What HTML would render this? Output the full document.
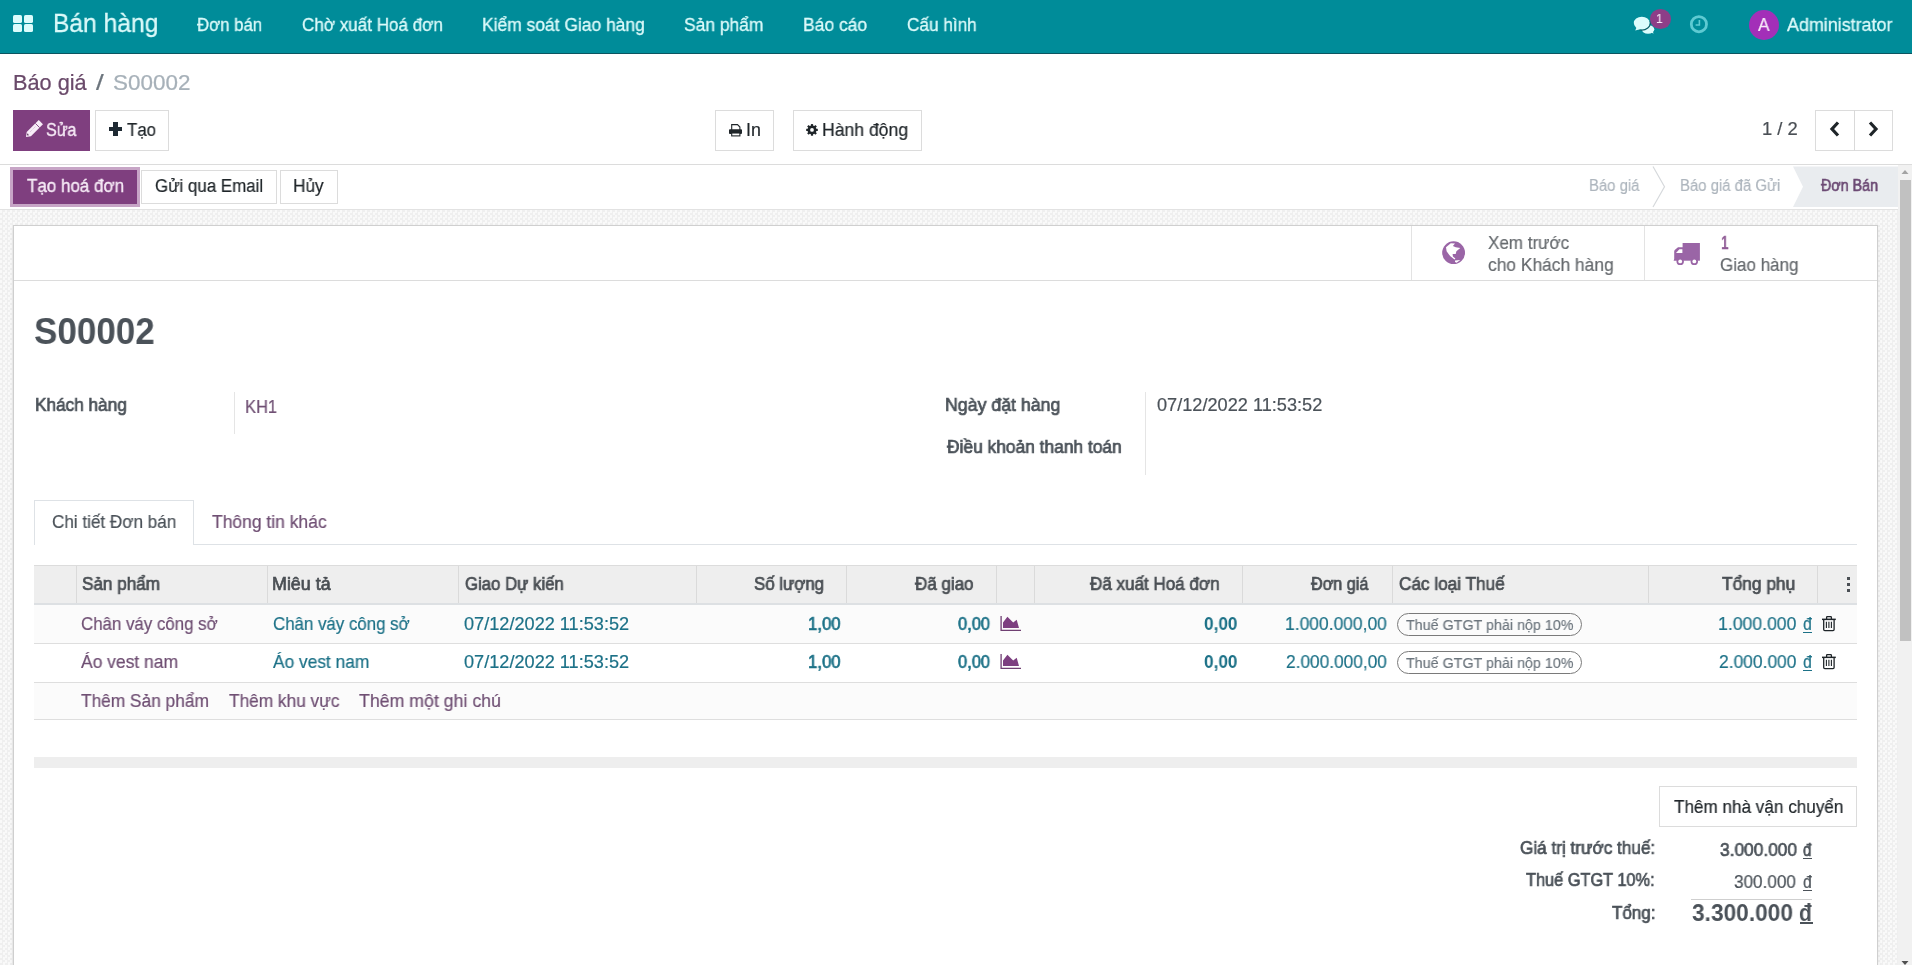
<!DOCTYPE html>
<html><head><meta charset="utf-8"><title>S00002</title>
<style>
html,body{margin:0;padding:0;}
body{width:1912px;height:965px;overflow:hidden;position:relative;background:#fff;font-family:"Liberation Sans",sans-serif;}
.r{position:absolute;}
.t{position:absolute;white-space:nowrap;line-height:1.117;transform-origin:0 0;will-change:transform;}
</style></head><body>
<div class="r" style="left:0px;top:0px;width:1912px;height:53px;background:#008c99;"></div>
<div class="r" style="left:0px;top:53px;width:1912px;height:1px;background:#0b5560;"></div>
<div class="r" style="left:13px;top:15px;width:9px;height:7.9px;background:#dcfcfc;border-radius:1.6px;"></div>
<div class="r" style="left:24px;top:15px;width:9px;height:7.9px;background:#dcfcfc;border-radius:1.6px;"></div>
<div class="r" style="left:13px;top:24.2px;width:9px;height:7.9px;background:#dcfcfc;border-radius:1.6px;"></div>
<div class="r" style="left:24px;top:24.2px;width:9px;height:7.9px;background:#dcfcfc;border-radius:1.6px;"></div>
<div class="t" style="left:52.51px;top:9.00px;font-size:26.02px;color:#dcfafa;-webkit-text-stroke:0.291px #dcfafa;transform:scaleX(0.9454);-webkit-text-stroke:0.3px #dcfafa;">Bán hàng</div>
<div class="t" style="left:197.40px;top:15.00px;font-size:18.31px;color:#dcfafa;-webkit-text-stroke:0.205px #dcfafa;transform:scaleX(0.9171);-webkit-text-stroke:0.3px #dcfafa;">Đơn bán</div>
<div class="t" style="left:301.97px;top:15.00px;font-size:18.31px;color:#dcfafa;-webkit-text-stroke:0.205px #dcfafa;transform:scaleX(0.9322);-webkit-text-stroke:0.3px #dcfafa;">Chờ xuất Hoá đơn</div>
<div class="t" style="left:482.05px;top:15.00px;font-size:18.31px;color:#dcfafa;-webkit-text-stroke:0.205px #dcfafa;transform:scaleX(0.9527);-webkit-text-stroke:0.3px #dcfafa;">Kiểm soát Giao hàng</div>
<div class="t" style="left:684.25px;top:15.00px;font-size:18.31px;color:#dcfafa;-webkit-text-stroke:0.205px #dcfafa;transform:scaleX(0.9512);-webkit-text-stroke:0.3px #dcfafa;">Sản phẩm</div>
<div class="t" style="left:803.05px;top:15.00px;font-size:18.31px;color:#dcfafa;-webkit-text-stroke:0.205px #dcfafa;transform:scaleX(0.9545);-webkit-text-stroke:0.3px #dcfafa;">Báo cáo</div>
<div class="t" style="left:906.86px;top:15.00px;font-size:18.31px;color:#dcfafa;-webkit-text-stroke:0.205px #dcfafa;transform:scaleX(0.9389);-webkit-text-stroke:0.3px #dcfafa;">Cấu hình</div>
<div class="t" style="left:1787.00px;top:15.00px;font-size:18.31px;color:#dcfafa;-webkit-text-stroke:0.205px #dcfafa;transform:scaleX(0.9778);-webkit-text-stroke:0.3px #dcfafa;">Administrator</div>
<div class="r" style="left:1749px;top:9.6px;width:30.2px;height:30.2px;background:#a32fb8;border-radius:50%;"></div>
<div class="t" style="left:1758.10px;top:15.70px;font-size:17.88px;color:#f7e8f9;-webkit-text-stroke:0.200px #f7e8f9;transform:scaleX(0.9667);">A</div>
<svg class="r" style="left:1632px;top:15px" width="24" height="20" viewBox="0 0 24 20">
<ellipse cx="16" cy="14.3" rx="6.3" ry="4.4" fill="#dcfcfc"/>
<path d="M18 16.5 L21.5 18.8 L20.5 14.5 Z" fill="#dcfcfc"/>
<ellipse cx="9.8" cy="8.1" rx="8" ry="6.4" fill="#dcfcfc"/>
<path d="M17.9 5.9 A8.6 7 0 0 1 7.06 14.7" fill="none" stroke="#0b5d67" stroke-width="1.1"/>
<path d="M4.5 12.5 L3.2 15.6 L9 14 Z" fill="#dcfcfc"/>
</svg>
<div class="r" style="left:1650px;top:9px;width:21px;height:19.5px;background:#8d3e88;border-radius:50%;"></div>
<div class="t" style="left:1656.08px;top:12.30px;font-size:13.08px;color:#f6e6f6;-webkit-text-stroke:0.146px #f6e6f6;transform:scaleX(0.9167);">1</div>
<svg class="r" style="left:1689px;top:15px" width="20" height="20" viewBox="0 0 20 20">
<circle cx="9.9" cy="9.2" r="7.6" fill="none" stroke="#5ecad2" stroke-width="2.8"/>
<path d="M10.4 5 V10 H6.6" fill="none" stroke="#5ecad2" stroke-width="1.6"/>
</svg>
<div class="t" style="left:13.08px;top:70.70px;font-size:21.22px;color:#6a4a6a;-webkit-text-stroke:0.237px #6a4a6a;transform:scaleX(1.0239);">Báo giá</div>
<div class="t" style="left:96.20px;top:70.70px;font-size:21.22px;color:#6c757d;-webkit-text-stroke:0.237px #6c757d;transform:scaleX(1.3000);">/</div>
<div class="t" style="left:113.14px;top:70.70px;font-size:21.22px;color:#a7b1b9;-webkit-text-stroke:0.237px #a7b1b9;transform:scaleX(1.0577);">S00002</div>
<div class="r" style="left:13px;top:110px;width:77px;height:41px;background:#7f3f7f;"></div>
<svg class="r" style="left:24px;top:119px" width="20" height="20" viewBox="0 0 20 20">
<path d="M2 18 L6.95 17.29 L18.97 5.27 L14.73 1.03 L2.71 13.05 Z" fill="#f8ecf8"/>
<path d="M15.6 8.6 L11.4 4.4" stroke="#7f3f7f" stroke-width="0.9"/>
<path d="M4.2 16.6 L3.4 14.8" stroke="#5a3a5a" stroke-width="1.2"/>
<path d="M6 13 L12 7" stroke="#b89ab8" stroke-width="0.6" stroke-dasharray="1 1"/>
</svg>
<div class="t" style="left:45.60px;top:120.50px;font-size:17.88px;color:#f6eaf6;-webkit-text-stroke:0.200px #f6eaf6;transform:scaleX(0.9000);-webkit-text-stroke:0.35px #f6eaf6;">Sửa</div>
<div class="r" style="left:95px;top:110px;width:74px;height:41px;background:#fff;border:1px solid #dcdcdc;box-sizing:border-box;"></div>
<div class="r" style="left:108.8px;top:126.6px;width:13.6px;height:4.4px;background:#1f2a33;"></div>
<div class="r" style="left:113.4px;top:122.2px;width:4.4px;height:13.6px;background:#1f2a33;"></div>
<div class="t" style="left:127.00px;top:120.50px;font-size:17.88px;color:#1f2529;-webkit-text-stroke:0.200px #1f2529;transform:scaleX(0.9433);">Tạo</div>
<div class="r" style="left:715px;top:110px;width:59px;height:41px;background:#fff;border:1px solid #dcdcdc;box-sizing:border-box;"></div>
<svg class="r" style="left:728px;top:123px" width="15" height="14" viewBox="0 0 15 14">
<path d="M3.7 7 V1.6 H9.5 L11.9 4 V7" fill="#fff" stroke="#1f2529" stroke-width="1.1"/>
<rect x="1" y="6.2" width="13" height="4.8" rx="0.9" fill="#1f2529"/>
<rect x="3.7" y="10" width="8.2" height="2.9" fill="#fff" stroke="#1f2529" stroke-width="1.1"/>
</svg>
<div class="t" style="left:746.03px;top:120.80px;font-size:17.88px;color:#1f2529;-webkit-text-stroke:0.200px #1f2529;transform:scaleX(0.9692);">In</div>
<div class="r" style="left:793px;top:110px;width:129px;height:41px;background:#fff;border:1px solid #dcdcdc;box-sizing:border-box;"></div>
<svg class="r" style="left:806px;top:124px" width="12" height="12" viewBox="0 0 12 12">
<g fill="#1f2529"><circle cx="6" cy="5.9" r="4.5"/>
<rect x="4.9" y="0.1" width="2.2" height="11.6"/>
<rect x="4.9" y="0.1" width="2.2" height="11.6" transform="rotate(45 6 5.9)"/>
<rect x="4.9" y="0.1" width="2.2" height="11.6" transform="rotate(90 6 5.9)"/>
<rect x="4.9" y="0.1" width="2.2" height="11.6" transform="rotate(135 6 5.9)"/></g>
<circle cx="6" cy="5.9" r="1.9" fill="#fff"/>
</svg>
<div class="t" style="left:822.02px;top:120.80px;font-size:17.88px;color:#1f2529;-webkit-text-stroke:0.200px #1f2529;transform:scaleX(0.9849);">Hành động</div>
<div class="t" style="left:1761.97px;top:119.60px;font-size:17.88px;color:#4a4f55;-webkit-text-stroke:0.200px #4a4f55;transform:scaleX(1.0303);">1 / 2</div>
<div class="r" style="left:1815px;top:110px;width:78px;height:41px;background:#fff;border:1px solid #dcdcdc;box-sizing:border-box;"></div>
<div class="r" style="left:1854px;top:110px;width:1px;height:41px;background:#d9d9d9;"></div>
<svg class="r" style="left:1828px;top:120px" width="14" height="18" viewBox="0 0 14 18">
<path d="M10 2.5 L4 9 L10 15.5" fill="none" stroke="#1f2529" stroke-width="3.2" stroke-linejoin="miter"/></svg>
<svg class="r" style="left:1866px;top:120px" width="14" height="18" viewBox="0 0 14 18">
<path d="M4 2.5 L10 9 L4 15.5" fill="none" stroke="#1f2529" stroke-width="3.2" stroke-linejoin="miter"/></svg>
<div class="r" style="left:0px;top:164px;width:1912px;height:1px;background:#dcdcdc;"></div>
<div class="r" style="left:10px;top:167px;width:130px;height:40px;background:#c7a5c6;"></div>
<div class="r" style="left:13px;top:170px;width:124px;height:34px;background:#7f3f7f;"></div>
<div class="t" style="left:27.30px;top:177.00px;font-size:17.88px;color:#f6eaf6;-webkit-text-stroke:0.200px #f6eaf6;transform:scaleX(0.9505);-webkit-text-stroke:0.35px #f6eaf6;">Tạo hoá đơn</div>
<div class="r" style="left:141px;top:170px;width:136px;height:34px;background:#fff;border:1px solid #dcdcdc;box-sizing:border-box;"></div>
<div class="t" style="left:155.30px;top:177.00px;font-size:17.88px;color:#1f2529;-webkit-text-stroke:0.200px #1f2529;transform:scaleX(0.9469);">Gửi qua Email</div>
<div class="r" style="left:280px;top:170px;width:58px;height:34px;background:#fff;border:1px solid #dcdcdc;box-sizing:border-box;"></div>
<div class="t" style="left:293.04px;top:177.00px;font-size:17.88px;color:#1f2529;-webkit-text-stroke:0.200px #1f2529;transform:scaleX(0.9645);">Hủy</div>
<svg class="r" style="left:1560px;top:165px" width="338" height="44" viewBox="0 0 338 44">
<path d="M233 1.5 H338 V42 H233 L243 21.75 Z" fill="#e9ecef"/>
<path d="M93 1.5 L104.5 21.75 L93 42" fill="none" stroke="#d6d9dc" stroke-width="1.2"/>
</svg>
<div class="t" style="left:1588.82px;top:177.30px;font-size:16.86px;color:#adb5bd;-webkit-text-stroke:0.189px #adb5bd;transform:scaleX(0.8825);">Báo giá</div>
<div class="t" style="left:1680.12px;top:177.30px;font-size:16.86px;color:#adb5bd;-webkit-text-stroke:0.189px #adb5bd;transform:scaleX(0.8839);">Báo giá đã Gửi</div>
<div class="t" style="left:1821.25px;top:177.30px;font-size:16.86px;color:#6c4a74;-webkit-text-stroke:0.660px #6c4a74;transform:scaleX(0.8471);">Đơn Bán</div>
<div class="r" style="left:0px;top:209px;width:1898px;height:756px;background-color:#f4f4f4;background-image:repeating-conic-gradient(#efefef 0 25%,#f9f9f9 0 50%);background-size:5px 5px;border-top:1px solid #e2e2e2;box-sizing:border-box;"></div>
<div class="r" style="left:13px;top:225px;width:1865px;height:740px;background:#fff;border:1px solid #cfcfcf;border-bottom:none;box-sizing:border-box;box-shadow:0 2px 4px rgba(0,0,0,.08);"></div>
<div class="r" style="left:14px;top:280px;width:1863px;height:1px;background:#dcdcdc;"></div>
<div class="r" style="left:1411px;top:226px;width:1px;height:54px;background:#e3e3e3;"></div>
<div class="r" style="left:1644px;top:226px;width:1px;height:54px;background:#e3e3e3;"></div>
<svg class="r" style="left:1442px;top:241px" width="24" height="24" viewBox="0 0 24 24">
<circle cx="11.6" cy="11.7" r="11.4" fill="#9a65a6"/>
<path d="M4 6.3 L8.8 2.3 L13 2.6 L10.9 4.9 L13.7 6.3 L18.3 7 L14.4 10.2 L13.7 13 L10.6 13 L10.9 15.5 L13.4 17.6 L12.5 18.5 L8.1 15.1 L4.6 10.2 Z" fill="#fff"/>
<path d="M13 19.4 L18.3 19 L14.5 21.8 L13 21 Z" fill="#fff"/>
</svg>
<div class="t" style="left:1487.60px;top:234.00px;font-size:17.88px;color:#666a6e;-webkit-text-stroke:0.200px #666a6e;transform:scaleX(0.9529);">Xem trước</div>
<div class="t" style="left:1487.60px;top:255.50px;font-size:17.88px;color:#666a6e;-webkit-text-stroke:0.200px #666a6e;transform:scaleX(0.9734);">cho Khách hàng</div>
<svg class="r" style="left:1673px;top:242px" width="28" height="24" viewBox="0 0 28 24">
<g fill="#9a65a6"><rect x="9.6" y="1" width="17.3" height="17.7"/>
<path d="M0.6 18.7 L1.2 17 V9.6 Q1.2 8.6 2 7.8 L5 5.3 H10 V18.7 Z"/>
<circle cx="7.2" cy="19.4" r="3.7"/><circle cx="21.3" cy="19.4" r="3.7"/></g>
<path d="M3 11 L6.4 7.2 H9.4 V10.9 Z" fill="#fff"/>
<circle cx="7.2" cy="19.4" r="1.9" fill="#fff"/><circle cx="21.3" cy="19.4" r="1.9" fill="#fff"/>
</svg>
<div class="t" style="left:1720.83px;top:234.00px;font-size:17.88px;color:#8f5a95;-webkit-text-stroke:0.700px #8f5a95;transform:scaleX(0.7667);">1</div>
<div class="t" style="left:1720.40px;top:255.50px;font-size:17.88px;color:#666a6e;-webkit-text-stroke:0.200px #666a6e;transform:scaleX(0.9524);">Giao hàng</div>
<div class="t" style="left:34.47px;top:309.60px;font-size:37.79px;color:#4b5259;font-weight:bold;transform:scaleX(0.9266);">S00002</div>
<div class="t" style="left:34.68px;top:395.00px;font-size:18.75px;color:#4b5259;-webkit-text-stroke:0.734px #4b5259;transform:scaleX(0.9172);">Khách hàng</div>
<div class="r" style="left:234px;top:392px;width:1px;height:42px;background:#e5e5e5;"></div>
<div class="t" style="left:244.58px;top:397.80px;font-size:17.88px;color:#6f4f73;-webkit-text-stroke:0.200px #6f4f73;transform:scaleX(0.9242);">KH1</div>
<div class="t" style="left:945.05px;top:395.00px;font-size:18.75px;color:#4b5259;-webkit-text-stroke:0.734px #4b5259;transform:scaleX(0.9458);">Ngày đặt hàng</div>
<div class="t" style="left:946.93px;top:437.20px;font-size:18.75px;color:#4b5259;-webkit-text-stroke:0.734px #4b5259;transform:scaleX(0.9259);">Điều khoản thanh toán</div>
<div class="r" style="left:1145px;top:392px;width:1px;height:83px;background:#e5e5e5;"></div>
<div class="t" style="left:1156.80px;top:396.30px;font-size:17.88px;color:#4b5259;-webkit-text-stroke:0.200px #4b5259;transform:scaleX(1.0167);">07/12/2022 11:53:52</div>
<div class="r" style="left:34px;top:500px;width:160px;height:45px;background:#fff;border:1px solid #dee2e6;border-bottom:none;box-sizing:border-box;"></div>
<div class="r" style="left:193px;top:544px;width:1664px;height:1px;background:#dee2e6;"></div>
<div class="t" style="left:52.00px;top:513.40px;font-size:17.88px;color:#4b5259;-webkit-text-stroke:0.200px #4b5259;transform:scaleX(0.9566);">Chi tiết Đơn bán</div>
<div class="t" style="left:212.00px;top:513.40px;font-size:17.88px;color:#6f4f73;-webkit-text-stroke:0.200px #6f4f73;transform:scaleX(0.9786);">Thông tin khác</div>
<div class="r" style="left:34px;top:565px;width:1823px;height:40px;background:#eeeeee;border-top:1px solid #dcdcdc;box-sizing:border-box;"></div>
<div class="r" style="left:34px;top:603px;width:1823px;height:2px;background:#dde0e3;"></div>
<div class="r" style="left:76px;top:566px;width:1px;height:37px;background:#dadada;"></div>
<div class="r" style="left:267px;top:566px;width:1px;height:37px;background:#dadada;"></div>
<div class="r" style="left:458px;top:566px;width:1px;height:37px;background:#dadada;"></div>
<div class="r" style="left:696px;top:566px;width:1px;height:37px;background:#dadada;"></div>
<div class="r" style="left:846px;top:566px;width:1px;height:37px;background:#dadada;"></div>
<div class="r" style="left:996px;top:566px;width:1px;height:37px;background:#dadada;"></div>
<div class="r" style="left:1034px;top:566px;width:1px;height:37px;background:#dadada;"></div>
<div class="r" style="left:1242px;top:566px;width:1px;height:37px;background:#dadada;"></div>
<div class="r" style="left:1392px;top:566px;width:1px;height:37px;background:#dadada;"></div>
<div class="r" style="left:1648px;top:566px;width:1px;height:37px;background:#dadada;"></div>
<div class="r" style="left:1817px;top:566px;width:1px;height:37px;background:#dadada;"></div>
<div class="t" style="left:82.20px;top:575.30px;font-size:17.88px;color:#4a4f54;-webkit-text-stroke:0.700px #4a4f54;transform:scaleX(0.9580);">Sản phẩm</div>
<div class="t" style="left:272.20px;top:575.30px;font-size:17.88px;color:#4a4f54;-webkit-text-stroke:0.700px #4a4f54;">Miêu tả</div>
<div class="t" style="left:464.50px;top:575.30px;font-size:17.88px;color:#4a4f54;-webkit-text-stroke:0.700px #4a4f54;transform:scaleX(0.9381);">Giao Dự kiến</div>
<div class="t" style="left:753.50px;top:575.30px;font-size:17.88px;color:#4a4f54;-webkit-text-stroke:0.700px #4a4f54;transform:scaleX(0.9432);">Số lượng</div>
<div class="t" style="left:914.55px;top:575.30px;font-size:17.88px;color:#4a4f54;-webkit-text-stroke:0.700px #4a4f54;transform:scaleX(0.9516);">Đã giao</div>
<div class="t" style="left:1090.45px;top:575.30px;font-size:17.88px;color:#4a4f54;-webkit-text-stroke:0.700px #4a4f54;transform:scaleX(0.9537);">Đã xuất Hoá đơn</div>
<div class="t" style="left:1311.10px;top:575.30px;font-size:17.88px;color:#4a4f54;-webkit-text-stroke:0.700px #4a4f54;transform:scaleX(0.9046);">Đơn giá</div>
<div class="t" style="left:1398.80px;top:575.30px;font-size:17.88px;color:#4a4f54;-webkit-text-stroke:0.700px #4a4f54;transform:scaleX(0.9618);">Các loại Thuế</div>
<div class="t" style="left:1721.70px;top:575.30px;font-size:17.88px;color:#4a4f54;-webkit-text-stroke:0.700px #4a4f54;transform:scaleX(0.9707);">Tổng phụ</div>
<div class="r" style="left:1847px;top:577px;width:3px;height:3px;background:#4a4f54;"></div>
<div class="r" style="left:1847px;top:583px;width:3px;height:3px;background:#4a4f54;"></div>
<div class="r" style="left:1847px;top:589px;width:3px;height:3px;background:#4a4f54;"></div>
<div class="r" style="left:34px;top:605px;width:1823px;height:38px;background:#fbfbfb;"></div>
<div class="r" style="left:34px;top:643px;width:1823px;height:1px;background:#dedede;"></div>
<div class="r" style="left:34px;top:644px;width:1823px;height:38px;background:#ffffff;"></div>
<div class="r" style="left:34px;top:682px;width:1823px;height:1px;background:#dedede;"></div>
<div class="r" style="left:34px;top:683px;width:1823px;height:36px;background:#fbfbfb;"></div>
<div class="r" style="left:34px;top:719px;width:1823px;height:1px;background:#dedede;"></div>
<div class="t" style="left:80.50px;top:615.00px;font-size:17.88px;color:#6f4f73;-webkit-text-stroke:0.200px #6f4f73;transform:scaleX(0.9441);">Chân váy công sở</div>
<div class="t" style="left:272.50px;top:615.00px;font-size:17.88px;color:#1c7187;-webkit-text-stroke:0.200px #1c7187;transform:scaleX(0.9441);">Chân váy công sở</div>
<div class="t" style="left:463.50px;top:615.00px;font-size:17.88px;color:#1c7187;-webkit-text-stroke:0.200px #1c7187;transform:scaleX(1.0160);">07/12/2022 11:53:52</div>
<div class="t" style="left:807.76px;top:615.00px;font-size:17.88px;color:#1c7187;-webkit-text-stroke:0.700px #1c7187;transform:scaleX(0.9382);">1,00</div>
<div class="t" style="left:958.30px;top:615.00px;font-size:17.88px;color:#1c7187;-webkit-text-stroke:0.700px #1c7187;transform:scaleX(0.9200);">0,00</div>
<svg class="r" style="left:1000px;top:615px" width="22" height="17" viewBox="0 0 22 17">
<path d="M1.1 1 V15.4 H21" fill="none" stroke="#6f3f72" stroke-width="1.3"/>
<path d="M3 7.6 L7.4 1.8 L13.2 7.6 L16.7 4.7 L19 13.1 H3 Z" fill="#7d3f80"/></svg>
<div class="t" style="left:1204.30px;top:615.00px;font-size:17.88px;color:#1c7187;font-weight:bold;transform:scaleX(0.9618);">0,00</div>
<div class="t" style="left:1285.02px;top:615.00px;font-size:17.88px;color:#1c7187;-webkit-text-stroke:0.200px #1c7187;transform:scaleX(0.9767);">1.000.000,00</div>
<div class="r" style="left:1397px;top:613px;width:185px;height:23px;border:1px solid #7a7a7a;border-radius:12px;box-sizing:border-box;"></div>
<div class="t" style="left:1406.00px;top:615.70px;font-size:15.26px;color:#6c757d;-webkit-text-stroke:0.171px #6c757d;transform:scaleX(0.9382);">Thuế GTGT phải nộp 10%</div>
<div class="t" style="left:1718.41px;top:615.00px;font-size:17.88px;color:#1c7187;-webkit-text-stroke:0.200px #1c7187;transform:scaleX(0.9872);">1.000.000</div>
<div class="t" style="left:1802.90px;top:615.00px;font-size:17.88px;color:#1c7187;-webkit-text-stroke:0.200px #1c7187;transform:scaleX(0.8900);">đ</div>
<div class="r" style="left:1802.9px;top:632.4px;width:8.899999999999864px;height:1px;background:#1c7187;"></div>
<svg class="r" style="left:1822px;top:616px" width="15" height="16" viewBox="0 0 15 16">
<path d="M4.6 2.9 V1.4 Q4.6 0.6 5.4 0.6 H8.6 Q9.4 0.6 9.4 1.4 V2.9" fill="none" stroke="#1f2529" stroke-width="1.3"/>
<rect x="0" y="2.6" width="13.8" height="1.5" fill="#1f2529"/>
<path d="M1.7 4 V13.5 Q1.7 14.6 2.8 14.6 H11 Q12.1 14.6 12.1 13.5 V4" fill="none" stroke="#1f2529" stroke-width="1.3"/>
<path d="M4.4 5.8 V12 M6.9 5.8 V12 M9.4 5.8 V12" stroke="#1f2529" stroke-width="1.1"/></svg>
<div class="t" style="left:80.50px;top:653.00px;font-size:17.88px;color:#6f4f73;-webkit-text-stroke:0.200px #6f4f73;transform:scaleX(0.9768);">Áo vest nam</div>
<div class="t" style="left:272.50px;top:653.00px;font-size:17.88px;color:#1c7187;-webkit-text-stroke:0.200px #1c7187;transform:scaleX(0.9697);">Áo vest nam</div>
<div class="t" style="left:463.50px;top:653.00px;font-size:17.88px;color:#1c7187;-webkit-text-stroke:0.200px #1c7187;transform:scaleX(1.0160);">07/12/2022 11:53:52</div>
<div class="t" style="left:807.76px;top:653.00px;font-size:17.88px;color:#1c7187;-webkit-text-stroke:0.700px #1c7187;transform:scaleX(0.9382);">1,00</div>
<div class="t" style="left:958.30px;top:653.00px;font-size:17.88px;color:#1c7187;-webkit-text-stroke:0.700px #1c7187;transform:scaleX(0.9200);">0,00</div>
<svg class="r" style="left:1000px;top:653px" width="22" height="17" viewBox="0 0 22 17">
<path d="M1.1 1 V15.4 H21" fill="none" stroke="#6f3f72" stroke-width="1.3"/>
<path d="M3 7.6 L7.4 1.8 L13.2 7.6 L16.7 4.7 L19 13.1 H3 Z" fill="#7d3f80"/></svg>
<div class="t" style="left:1204.30px;top:653.00px;font-size:17.88px;color:#1c7187;font-weight:bold;transform:scaleX(0.9618);">0,00</div>
<div class="t" style="left:1286.00px;top:653.00px;font-size:17.88px;color:#1c7187;-webkit-text-stroke:0.200px #1c7187;transform:scaleX(0.9673);">2.000.000,00</div>
<div class="r" style="left:1397px;top:651px;width:185px;height:23px;border:1px solid #7a7a7a;border-radius:12px;box-sizing:border-box;"></div>
<div class="t" style="left:1406.00px;top:653.70px;font-size:15.26px;color:#6c757d;-webkit-text-stroke:0.171px #6c757d;transform:scaleX(0.9382);">Thuế GTGT phải nộp 10%</div>
<div class="t" style="left:1719.40px;top:653.00px;font-size:17.88px;color:#1c7187;-webkit-text-stroke:0.200px #1c7187;transform:scaleX(0.9747);">2.000.000</div>
<div class="t" style="left:1802.90px;top:653.00px;font-size:17.88px;color:#1c7187;-webkit-text-stroke:0.200px #1c7187;transform:scaleX(0.8900);">đ</div>
<div class="r" style="left:1802.9px;top:670.4px;width:8.899999999999864px;height:1px;background:#1c7187;"></div>
<svg class="r" style="left:1822px;top:654px" width="15" height="16" viewBox="0 0 15 16">
<path d="M4.6 2.9 V1.4 Q4.6 0.6 5.4 0.6 H8.6 Q9.4 0.6 9.4 1.4 V2.9" fill="none" stroke="#1f2529" stroke-width="1.3"/>
<rect x="0" y="2.6" width="13.8" height="1.5" fill="#1f2529"/>
<path d="M1.7 4 V13.5 Q1.7 14.6 2.8 14.6 H11 Q12.1 14.6 12.1 13.5 V4" fill="none" stroke="#1f2529" stroke-width="1.3"/>
<path d="M4.4 5.8 V12 M6.9 5.8 V12 M9.4 5.8 V12" stroke="#1f2529" stroke-width="1.1"/></svg>
<div class="t" style="left:80.50px;top:692.00px;font-size:17.88px;color:#6f4f73;-webkit-text-stroke:0.200px #6f4f73;transform:scaleX(0.9687);">Thêm Sản phẩm</div>
<div class="t" style="left:228.70px;top:692.00px;font-size:17.88px;color:#6f4f73;-webkit-text-stroke:0.200px #6f4f73;transform:scaleX(0.9675);">Thêm khu vực</div>
<div class="t" style="left:359.00px;top:692.00px;font-size:17.88px;color:#6f4f73;-webkit-text-stroke:0.200px #6f4f73;transform:scaleX(0.9930);">Thêm một ghi chú</div>
<div class="r" style="left:34px;top:757px;width:1823px;height:11px;background:#eeeeee;"></div>
<div class="r" style="left:1659px;top:786px;width:198px;height:41px;background:#fff;border:1px solid #dcdcdc;box-sizing:border-box;"></div>
<div class="t" style="left:1673.70px;top:798.40px;font-size:17.88px;color:#1f2529;-webkit-text-stroke:0.200px #1f2529;transform:scaleX(0.9585);">Thêm nhà vận chuyển</div>
<div class="t" style="left:1520.00px;top:838.90px;font-size:17.88px;color:#4b5259;-webkit-text-stroke:0.700px #4b5259;transform:scaleX(0.9600);">Giá trị trước thuế:</div>
<div class="t" style="left:1719.90px;top:840.50px;font-size:17.88px;color:#4b5259;-webkit-text-stroke:0.700px #4b5259;transform:scaleX(0.9696);">3.000.000</div>
<div class="t" style="left:1802.80px;top:840.50px;font-size:17.88px;color:#4b5259;-webkit-text-stroke:0.700px #4b5259;transform:scaleX(0.8455);">đ</div>
<div class="r" style="left:1802.8px;top:857.5px;width:9.299999999999955px;height:1.6px;background:#4b5259;"></div>
<div class="t" style="left:1526.40px;top:870.50px;font-size:17.88px;color:#4b5259;-webkit-text-stroke:0.700px #4b5259;transform:scaleX(0.9143);">Thuế GTGT 10%:</div>
<div class="t" style="left:1734.40px;top:873.00px;font-size:17.88px;color:#4b5259;-webkit-text-stroke:0.200px #4b5259;transform:scaleX(0.9594);">300.000</div>
<div class="t" style="left:1802.80px;top:873.00px;font-size:17.88px;color:#4b5259;-webkit-text-stroke:0.200px #4b5259;transform:scaleX(0.8800);">đ</div>
<div class="r" style="left:1802.8px;top:889.6px;width:8.799999999999955px;height:1.2px;background:#4b5259;"></div>
<div class="r" style="left:1691px;top:899px;width:121px;height:1px;background:#cfcfcf;"></div>
<div class="t" style="left:1611.60px;top:903.70px;font-size:17.88px;color:#4b5259;-webkit-text-stroke:0.700px #4b5259;transform:scaleX(0.9511);">Tổng:</div>
<div class="t" style="left:1692.20px;top:899.60px;font-size:23.55px;color:#4b5259;font-weight:bold;transform:scaleX(0.9635);">3.300.000</div>
<div class="t" style="left:1799.31px;top:899.60px;font-size:23.55px;color:#4b5259;font-weight:bold;transform:scaleX(0.8857);">đ</div>
<div class="r" style="left:1800.2px;top:922.2px;width:12.399999999999864px;height:2px;background:#4b5259;"></div>
<div class="r" style="left:1898px;top:165px;width:14px;height:800px;background:#f1f1f1;"></div>
<div class="r" style="left:1900px;top:180px;width:11px;height:461px;background:#c1c1c1;"></div>
<svg class="r" style="left:1898px;top:165px" width="14" height="14" viewBox="0 0 14 14"><path d="M3.5 9 L7 5 L10.5 9 Z" fill="#a3a3a3"/></svg>
<svg class="r" style="left:1898px;top:956px" width="14" height="9" viewBox="0 0 14 9"><path d="M3.5 5 L7 9 L10.5 5 Z" fill="#505050"/></svg>
</body></html>
